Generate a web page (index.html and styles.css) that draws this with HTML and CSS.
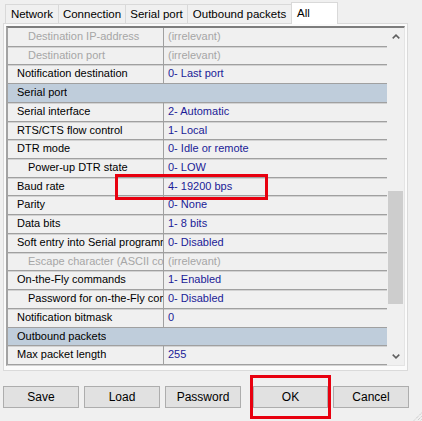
FILE: index.html
```html
<!DOCTYPE html>
<html>
<head>
<meta charset="utf-8">
<title>Settings</title>
<link rel="stylesheet" href="styles.css">
</head>
<body>
<div class="dialog">
  <div class="tabs">
    <div class="tab tab-network">Network</div>
    <div class="tab tab-connection">Connection</div>
    <div class="tab tab-serial">Serial port</div>
    <div class="tab tab-outbound">Outbound packets</div>
    <div class="tab tab-all active">All</div>
  </div>

  <div class="panel">
    <div class="grid">
      <div class="rows">
        <div class="row dim"><div class="name sub">Destination IP-address</div><div class="value">(irrelevant)</div></div>
        <div class="row dim"><div class="name sub">Destination port</div><div class="value">(irrelevant)</div></div>
        <div class="row"><div class="name">Notification destination</div><div class="value">0- Last port</div></div>
        <div class="row group"><div class="name">Serial port</div></div>
        <div class="row"><div class="name">Serial interface</div><div class="value">2- Automatic</div></div>
        <div class="row"><div class="name">RTS/CTS flow control</div><div class="value">1- Local</div></div>
        <div class="row"><div class="name">DTR mode</div><div class="value">0- Idle or remote</div></div>
        <div class="row"><div class="name sub">Power-up DTR state</div><div class="value">0- LOW</div></div>
        <div class="row"><div class="name">Baud rate</div><div class="value">4- 19200 bps</div></div>
        <div class="row"><div class="name">Parity</div><div class="value">0- None</div></div>
        <div class="row"><div class="name">Data bits</div><div class="value">1- 8 bits</div></div>
        <div class="row"><div class="name">Soft entry into Serial programming mode</div><div class="value">0- Disabled</div></div>
        <div class="row dim"><div class="name sub">Escape character (ASCII code)</div><div class="value">(irrelevant)</div></div>
        <div class="row"><div class="name">On-the-Fly commands</div><div class="value">1- Enabled</div></div>
        <div class="row"><div class="name sub">Password for on-the-Fly commands</div><div class="value">0- Disabled</div></div>
        <div class="row"><div class="name">Notification bitmask</div><div class="value">0</div></div>
        <div class="row group"><div class="name">Outbound packets</div></div>
        <div class="row"><div class="name">Max packet length</div><div class="value">255</div></div>
      </div>
      <div class="scrollbar">
        <div class="sb-btn">
          <svg width="8" height="5" viewBox="0 0 8 5"><polyline points="0.7,4.4 4,1.1 7.3,4.4" fill="none" stroke="#5f5f5f" stroke-width="1.5"/></svg>
        </div>
        <div class="sb-track"><div class="sb-thumb"></div></div>
        <div class="sb-btn">
          <svg width="8" height="5" viewBox="0 0 8 5"><polyline points="0.7,0.6 4,3.9 7.3,0.6" fill="none" stroke="#5f5f5f" stroke-width="1.5"/></svg>
        </div>
      </div>
    </div>
  </div>

  <div class="buttons">
    <button class="btn">Save</button>
    <button class="btn">Load</button>
    <button class="btn">Password</button>
    <button class="btn btn-ok">OK</button>
    <button class="btn">Cancel</button>
  </div>

  <div class="mark mark-baud"></div>
  <div class="mark mark-ok"></div>

  <svg class="grip" width="11" height="11" viewBox="0 0 11 11">
    <path d="M10.5 3 L3 10.5 M10.5 6.5 L6.5 10.5 M10.5 9.5 L9.5 10.5" stroke="#b8b8b8" stroke-width="1" stroke-dasharray="1 1" fill="none"/>
  </svg>
</div>
</body>
</html>
```

FILE: styles.css
```css
* {
  box-sizing: border-box;
}

html, body {
  margin: 0;
  padding: 0;
  background: #f0f0f0;
}

body {
  font-family: "Liberation Sans", Arial, sans-serif;
  font-size: 11.5px;
  color: #000;
}

.dialog {
  position: relative;
  width: 422px;
  height: 421px;
  overflow: hidden;
}

/* tab strip */
.tabs {
  display: flex;
  align-items: flex-end;
  height: 23px;
  padding-left: 5px;
}

.tab {
  height: 19px;
  line-height: 18px;
  text-align: center;
  background: #f0f0f0;
  border: 1px solid #d9d9d9;
  border-bottom: none;
  margin-left: -1px;
  white-space: nowrap;
}

.tab:first-child {
  margin-left: 0;
}

.tab-network { width: 54px; }
.tab-connection { width: 68px; }
.tab-serial { width: 63px; }
.tab-outbound { width: 105px; }
.tab-all {
  width: 47px;
  text-align: left;
  padding-left: 5px;
}

.tab.active {
  height: 22px;
  line-height: 20px;
  background: #fff;
  position: relative;
  z-index: 1;
  margin-bottom: -1px;
}

/* tab page */
.panel {
  width: 405px;
  height: 348px;
  margin-left: 3px;
  background: #fbfbfb;
  border: 1px solid #dadada;
  padding: 2px 2px 0 2px;
}

.grid {
  display: flex;
  width: 399px;
  height: 340px;
  border-top: 2px solid #7d7d7d;
  border-left: 2px solid #a3a3a3;
  border-right: 1px solid #e4e4e4;
  border-bottom: 1px solid #e4e4e4;
  background: #f0f0f0;
  font-size: 11px;
}

.rows {
  width: 379px;
  display: flex;
  flex-direction: column;
}

.row {
  display: flex;
  height: 18.75px;
  line-height: 17px;
  border-bottom: 1px solid #a0a0a0;
  box-shadow: 0 1px 0 #d2d2d2;
  color: #000;
}

.name {
  width: 156px;
  flex: none;
  padding-left: 9px;
  border-right: 1px solid #a0a0a0;
  white-space: nowrap;
  overflow: hidden;
}

.name.sub {
  padding-left: 20px;
}

.value {
  flex: 1;
  padding-left: 4px;
  color: #1b1b97;
  white-space: nowrap;
  overflow: hidden;
}

.row.dim .name,
.row.dim .value {
  color: #a6a6a6;
}

.row.group {
  background: #bfcddb;
}

.row.group .name {
  border-right: none;
  width: auto;
}

/* vertical scrollbar */
.scrollbar {
  width: 17px;
  display: flex;
  flex-direction: column;
  background: #f0f0f0;
}

.sb-btn {
  height: 17px;
  display: flex;
  align-items: center;
  justify-content: center;
}

.sb-track {
  flex: 1;
  padding: 0 1px;
}

.sb-thumb {
  margin-top: 146px;
  height: 113px;
  background: #cdcdcd;
}

/* dialog buttons */
.buttons {
  display: flex;
  margin-top: 15px;
  padding-left: 3px;
}

.btn {
  width: 76px;
  height: 22px;
  margin-right: 5px;
  padding: 0;
  font-family: inherit;
  font-size: 12px;
  color: #000;
  background: #e1e1e1;
  border: 1px solid #adadad;
  border-radius: 0;
}

.btn-ok {
  margin-left: 7px;
  width: 75px;
}

/* red highlight frames */
.mark {
  position: absolute;
  border: 3px solid #e8000f;
}

.mark-baud {
  left: 115px;
  top: 174px;
  width: 153px;
  height: 26px;
}

.mark-ok {
  left: 250px;
  top: 375px;
  width: 81px;
  height: 44px;
}

.grip {
  position: absolute;
  right: 0;
  bottom: 0;
}
```
